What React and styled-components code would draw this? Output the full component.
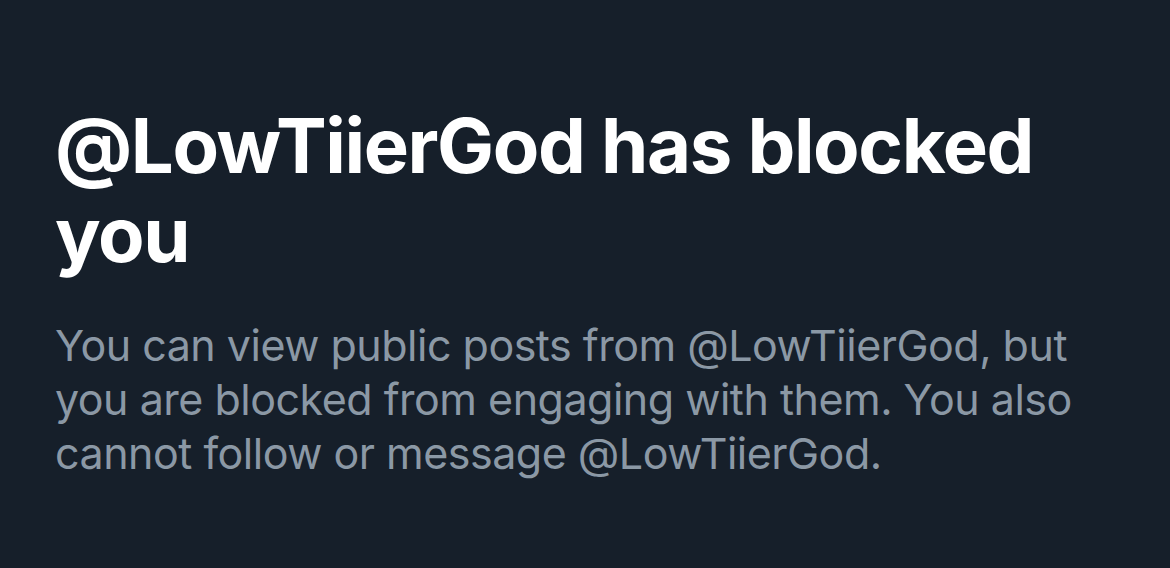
import styled, { createGlobalStyle } from "styled-components";

const GlobalStyle = createGlobalStyle`
  html, body {
    margin: 0;
    padding: 0;
    background-color: #161f2a;
  }
  #root {
    min-height: 100vh;
  }
`;

const Screen = styled.div`
  width: 1170px;
  height: 568px;
  box-sizing: border-box;
  padding: 101px 60px 0 55px;
  background-color: #161f2a;
  display: flex;
  flex-direction: column;
  gap: 39px;
  font-family: Inter, "Liberation Sans", sans-serif;
  overflow: hidden;
`;

const Title = styled.h1`
  margin: 0;
  color: #ffffff;
  font-size: 76px;
  font-weight: 700;
  line-height: 89px;
  letter-spacing: -1.4px;
`;

const Message = styled.p`
  margin: 0;
  max-width: 1040px;
  color: #8b98a5;
  font-size: 43px;
  font-weight: 400;
  line-height: 54px;
  letter-spacing: -0.5px;
`;

const App = () => {
  const handle = "@LowTiierGod";
  return (
    <>
      <GlobalStyle />
      <Screen>
        <Title>{handle} has blocked you</Title>
        <Message>
          You can view public posts from {handle}, but you are blocked from
          engaging with them. You also cannot follow or message {handle}.
        </Message>
      </Screen>
    </>
  );
};

export default App;
